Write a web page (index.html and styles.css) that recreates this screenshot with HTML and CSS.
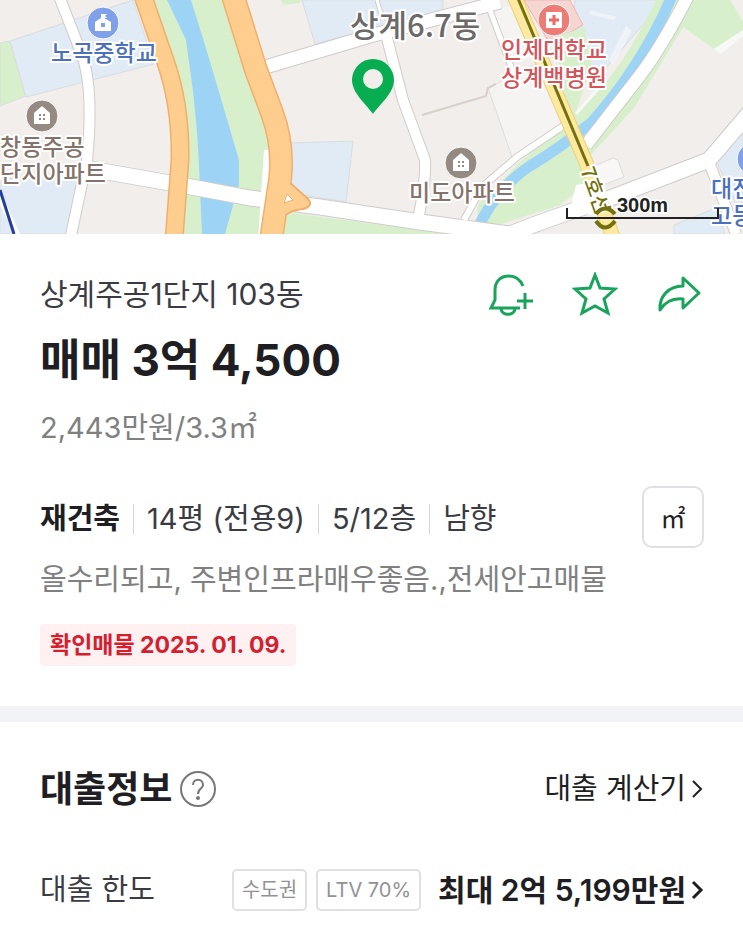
FILE: index.html
```
<!DOCTYPE html>
<html lang="ko">
<head>
    <meta charset="UTF-8">
    <meta name="viewport" content="width=device-width, initial-scale=1.0">
    <title>상계주공1단지 103동</title>
    <link rel="stylesheet" href="styles.css">
</head>
<body>
    <svg class="mapa" viewBox="0 0 743 234" role="img" aria-label="지도">
        <rect width="743" height="234" fill="#f1eeec"/>

        <!-- school lots and parks -->
        <g stroke="#d9dde0" stroke-width="1">
            <path d="M0 43L10 41L26 96L0 106Z" fill="#d8efcb"/>
            <path d="M10 41L133 0L154 64L26 97Z" fill="#e1ebf5"/>
            <path d="M0 180L78 170L86 185L72 234H0Z" fill="#e1ebf5"/>
            <path d="M302 0H443V10L315 44Z" fill="#e1ebf5"/>
            <path d="M290 143L353 141L346 202L285 192Z" fill="#e1ebf5"/>
            <path d="M575 0H664L600 75L570 70Z" fill="#e1ebf5"/>
            <path d="M674 225L716 208L725 234H674Z" fill="#e1ebf5"/>
            <path d="M716 160L743 130V220Z" fill="#e1ebf5"/>
        </g>
        <path d="M281 0H301L299 3L283 5Z" fill="#d8efcb"/>
        <path d="M0 190L20 234H14L0 205Z" fill="#fff"/>
        <path d="M524 0H570L583 25L550 44Z" fill="#f6d6d3" stroke="#eeb4ae"/>
        <path d="M554 38L584 27L592 64L570 130Z" fill="#d8efcb"/>
        <path d="M679 24L692 0H730L743 22V30L714 49Z" fill="#d8efcb"/>
        <path d="M714 49L743 30V36L721 54Z" fill="#f8f8f7"/>
        <path d="M488 88L540 62L570 120L513 160Z" fill="#f5f4f3" stroke="#dfddda"/>
        <path d="M494 10L520 4L540 55L510 65Z" fill="#f5f4f3"/>
        <path d="M590 10L617 17L613 20L589 14M609 60L626 26L632 30L613 66" fill="#eff3f8"/>
        <path d="M422 115L486 96L488 88L496 84" fill="none" stroke="#d9d1c9" stroke-width="2"/>

        <!-- river and its banks -->
        <path d="M134 0H236L276 130L260 234H170L184 130Z" fill="#d8efcb"/>
        <path d="M167 0H191L205 45Q220 95 239 160V184L225 234H202L200 190Q198 120 189 62L186 40Z" fill="#9dd4f6"/>
        <path d="M656 0H700Q660 65 634 108L590 156L592 180L560 205L476 232L478 205L520 162L578 112Q620 75 656 0Z" fill="#d8efcb"/>
        <path d="M672 -4Q642 66 592 122Q560 148 530 166Q496 188 476 232" fill="none" stroke="#9dd4f6" stroke-width="11"/>
        <path d="M284 212L450 234H275Z" fill="#d8efcb"/>
        <path d="M576 114L602 84" stroke="#f8f8f6" stroke-width="3"/>
        <path d="M592 167L613 158L618 160L624 177L590 190Z" fill="#f8f7f6" stroke="#dfddda"/>

        <!-- white streets, grey outline below -->
        <g fill="none" stroke-linejoin="round">
            <g stroke="#cfccca">
                <path d="M59 -4L82 55Q94 90 87 160L70 240" stroke-width="12"/>
                <path d="M85 168L170 183L250 198L320 207L420 222L510 234Q550 218 600 202L709 160L750 112" stroke-width="17"/>
                <path d="M262 68L370 36L500 2" stroke-width="15"/>
                <path d="M387 38L403 100L425 160Q426 180 419 215" stroke-width="12"/>
                <path d="M377 0L383 20" stroke-width="5"/>
                <path d="M488 5L516 80" stroke-width="7"/>
                <path d="M464 220L482 187L517 157L572 120" stroke-width="8"/>
                <path d="M688 -4Q660 50 638 78L586 145" stroke-width="14"/>
                <path d="M709 162L736 234" stroke-width="12"/>
            </g>
            <g stroke="#fff">
                <path d="M59 -4L82 55Q94 90 87 160L70 240" stroke-width="10"/>
                <path d="M85 168L170 183L250 198L320 207L420 222L510 234Q550 218 600 202L709 160L750 112" stroke-width="15"/>
                <path d="M262 68L370 36L500 2" stroke-width="13"/>
                <path d="M387 38L403 100L425 160Q426 180 419 215" stroke-width="10"/>
                <path d="M377 0L383 20" stroke-width="3"/>
                <path d="M488 5L516 80" stroke-width="5"/>
                <path d="M464 220L482 187L517 157L572 120" stroke-width="6"/>
                <path d="M688 -4Q660 50 638 78L586 145" stroke-width="12"/>
                <path d="M709 162L736 234" stroke-width="10"/>
                <path d="M268 150L262 240" stroke-width="8"/>
            </g>
        </g>

        <!-- orange main roads -->
        <g fill="none" stroke="#eeb06c">
            <path d="M143 -4L165 60Q181 105 180 160L174 240" stroke-width="19"/>
            <path d="M233 -4L256 70L272 113Q284 145 280 180L271 240" stroke-width="24"/>
        </g>
        <path d="M288 181L308 199Q314 206 303 209Q286 211 282 220L274 213L278 180Z" fill="#ffcd8d" stroke="#eeb06c" stroke-width="2"/>
        <g fill="none" stroke="#ffcd8d">
            <path d="M143 -4L165 60Q181 105 180 160L174 240" stroke-width="16"/>
            <path d="M233 -4L256 70L272 113Q284 145 280 180L271 240" stroke-width="21"/>
        </g>
        <path d="M287 194L293 200L284 203Z" fill="#fff" stroke="#eeb06c"/>

        <!-- line 7 -->
        <g fill="none">
            <path d="M514 -4L585 160L614 240" stroke="#e8d17e" stroke-width="15"/>
            <path d="M514 -4L585 160L614 240" stroke="#fde9a0" stroke-width="13"/>
            <path d="M517 -4L588 166" stroke="#74700d" stroke-width="3"/>
            <path d="M0 190L14 234" stroke="#233f9a" stroke-width="3"/>
        </g>
        <path d="M576 185L604 180L608 205L590 215L570 210Z" fill="#fff"/>

        <!-- place icons -->
        <g stroke="#fff" stroke-width="1">
            <circle cx="103" cy="23" r="16" fill="#7fa1e9"/>
            <circle cx="42" cy="116" r="16" fill="#958a82"/>
            <circle cx="461" cy="163" r="16" fill="#958a82"/>
            <circle cx="554" cy="20" r="16" fill="#eb7d76"/>
            <circle cx="753" cy="159" r="16" fill="#7fa1e9"/>
        </g>
        <path d="M95 31V22L101 18V14H107L105 16L107 18H104L111 22V31Z" fill="#fff"/>
        <rect x="101" y="23" width="4" height="4" fill="#7fa1e9"/>
        <g id="casa">
            <path d="M34 124V113L42 106L50 113V124Z" fill="#fff"/>
            <path d="M39 114h2v2h-2zM43 114h2v2h-2zM39 118h2v2h-2zM43 118h2v2h-2z" fill="#958a82"/>
        </g>
        <use href="#casa" x="419" y="47"/>
        <rect x="546" y="12" width="16" height="16" rx="1" fill="#fff"/>
        <path d="M554 15V25M549 20H559" stroke="#eb6a65" stroke-width="3"/>

        <!-- labels -->
        <g class="rotulo">
            <text x="51" y="61" fill="#4d70ba">노곡중학교</text>
            <text x="0" y="155" fill="#84736a">창동주공</text>
            <text x="-13" y="182" fill="#84736a">8단지아파트</text>
            <text x="409" y="201" fill="#84736a">미도아파트</text>
            <text x="501" y="58" fill="#d2555c">인제대학교</text>
            <text x="501" y="86" fill="#d2555c">상계백병원</text>
            <text x="711" y="197" fill="#4d70ba">대진</text>
            <text x="711" y="224" fill="#4d70ba">고등</text>
            <text class="barrio" x="350" y="37" fill="#6c6968">상계6.7동</text>
            <text class="linea" transform="translate(580 170) rotate(70)" fill="#74700d">7호선</text>
        </g>
        <path d="M596 214Q605 203 615 214M596 221Q605 234 615 221" fill="none" stroke="#74700d" stroke-width="4"/>

        <!-- scale -->
        <path d="M567 208V218H718V208" fill="none" stroke="#222" stroke-width="2"/>
        <text class="escala" x="617" y="212">300m</text>

        <path fill-rule="evenodd" d="M373 114C366 104 352 93 352 80A21 21 0 0 1 394 80C394 93 380 104 373 114ZM373 69A10 10 0 1 0 373 89A10 10 0 1 0 373 69Z" fill="#07ad50"/>
    </svg>

    <section class="resumen">
        <div class="fila">
            <h2 class="edificio">상계주공1단지 103동</h2>
            <div class="acciones">
                <button type="button" aria-label="알림 추가">
                    <svg width="46" height="44" viewBox="0 0 46 44">
                        <path d="M35 14C32 7 27 4 21 4C12 4 7 10 7 18V28L3 36H32M13 37C14 44 26 44 27 37M37 21V37M29 29H45"/>
                    </svg>
                </button>
                <button type="button" aria-label="관심 매물">
                    <svg width="46" height="44" viewBox="0 0 46 44">
                        <path d="M23 3L28 16L43 17L32 27L36 41L23 34L10 41L14 27L3 17L18 16Z"/>
                    </svg>
                </button>
                <button type="button" aria-label="공유">
                    <svg width="46" height="44" viewBox="0 0 46 44">
                        <path d="M27 6L43 21L27 36V27C16 26 9 30 4 38C3 25 12 14 27 14Z" stroke-linejoin="round"/>
                    </svg>
                </button>
            </div>
        </div>
        <h1 class="precio">매매 3억 4,500</h1>
        <p class="unitario">2,443만원/3.3㎡</p>

        <div class="fila fila-datos">
            <ul class="datos">
                <li><strong>재건축</strong></li>
                <li>14평 (전용9)</li>
                <li>5/12층</li>
                <li>남향</li>
            </ul>
            <button class="btn-unidad" type="button">㎡</button>
        </div>
        <p class="descripcion">올수리되고, 주변인프라매우좋음.,전세안고매물</p>
        <span class="confirmado">확인매물 2025. 01. 09.</span>
    </section>

    <section class="prestamo">
        <div class="fila">
            <div class="titulo">
                <h2>대출정보</h2>
                <button type="button" aria-label="도움말">
                    <svg width="38" height="38" viewBox="0 0 38 38">
                        <circle cx="19" cy="19" r="17"/>
                        <path d="M14 15C14 8 24 8 24 15C24 19 19 18 19 24"/>
                        <circle class="punto" cx="19" cy="28" r="2"/>
                    </svg>
                </button>
            </div>
            <a class="calculadora" href="#">대출 계산기
                <svg width="14" height="22" viewBox="0 0 14 22"><path d="M3 3L11 11L3 19"/></svg>
            </a>
        </div>
        <div class="fila fila-limite">
            <span class="limite">대출 한도</span>
            <div class="valor">
                <span class="etiqueta">수도권</span>
                <span class="etiqueta">LTV 70%</span>
                <a class="maximo" href="#">최대 2억 5,199만원
                    <svg width="14" height="22" viewBox="0 0 14 22"><path d="M3 3L11 11L3 19"/></svg>
                </a>
            </div>
        </div>
    </section>
</body>
</html>
```
FILE: styles.css
```
* {
    box-sizing: border-box;
}
body {
    margin: 0;
    background-color: #fff;
    color: #3b3b43;
    font-family: Inter, "Noto Sans CJK KR", sans-serif;
    font-size: 29px;
    line-height: 40px;
}
h1, h2, p, ul {
    margin: 0;
    padding: 0;
}
button {
    padding: 0;
    border: 0;
    background: none;
    font-family: inherit;
    cursor: pointer;
}
a {
    color: #1e1e23;
    text-decoration: none;
}
svg {
    display: block;
}

/* mapa */
.mapa {
    width: 100%;
    height: auto;
}
.rotulo {
    font-family: "Noto Sans CJK KR", sans-serif;
    font-size: 23px;
    font-weight: 500;
    stroke: #fff;
    stroke-width: 4px;
    stroke-linejoin: round;
    paint-order: stroke;
}
.rotulo .barrio {
    font-size: 31px;
}
.rotulo .linea {
    font-size: 20px;
}
.escala {
    font-family: "Liberation Sans", sans-serif;
    font-size: 20px;
    font-weight: bold;
    fill: #222;
    stroke: #fff;
    stroke-width: 3px;
    paint-order: stroke;
}

.fila {
    display: flex;
    justify-content: space-between;
    align-items: center;
}

/* resumen */
.resumen {
    padding: 38px 39px 40px 40px;
    border-bottom: 16px solid #f1f3f6;
}
.edificio {
    font-size: 30px;
    font-weight: 400;
}
.acciones {
    display: flex;
    gap: 38px;
    margin-right: 2px;
}
.acciones svg {
    fill: none;
    stroke: #18a55b;
    stroke-width: 3;
}
.precio {
    margin-top: 16px;
    color: #1e1e23;
    font-size: 44px;
    font-weight: 700;
    line-height: 56px;
}
.unitario {
    margin-top: 20px;
    color: #808080;
    font-weight: 400;
}
.fila-datos {
    margin-top: 38px;
}
.datos {
    display: flex;
    padding-top: 4px;
    list-style: none;
}
.datos li {
    display: flex;
    align-items: center;
}
.datos li + li::before {
    content: "";
    width: 1px;
    height: 30px;
    margin: 0 13px;
    background-color: #d8d8dc;
}
.datos strong {
    color: #1e1e23;
    font-weight: 700;
}
.btn-unidad {
    width: 62px;
    height: 62px;
    border: 2px solid #e0e0e2;
    border-radius: 10px;
    color: #1e1e23;
    font-size: 25px;
}
.descripcion {
    margin-top: 12px;
    color: #808080;
    font-weight: 400;
}
.confirmado {
    display: inline-block;
    margin-top: 24px;
    padding: 0 10px;
    border-radius: 4px;
    background-color: #fff1f2;
    color: #d3202e;
    font-size: 23px;
    font-weight: 700;
    line-height: 42px;
}

/* prestamo */
.prestamo {
    padding: 41px 39px 24px 40px;
}
.titulo {
    display: flex;
    align-items: center;
    gap: 7px;
}
.titulo h2 {
    color: #1e1e23;
    font-size: 36px;
    font-weight: 700;
    line-height: 52px;
}
.titulo svg {
    fill: none;
    stroke: #77777a;
    stroke-width: 2;
}
.titulo .punto {
    fill: #77777a;
    stroke: none;
}
.calculadora, .maximo {
    display: flex;
    align-items: center;
    gap: 4px;
}
.calculadora svg, .maximo svg {
    fill: none;
    stroke: #1e1e23;
    stroke-width: 2;
}
.maximo {
    margin-left: 8px;
    font-size: 30px;
    font-weight: 600;
}
.maximo svg {
    stroke-width: 3;
}
.fila-limite {
    margin-top: 54px;
}
.valor {
    display: flex;
    align-items: center;
    gap: 9px;
}
.etiqueta {
    padding: 0 8px;
    border: 2px solid #e0e0e2;
    border-radius: 5px;
    color: #929294;
    font-size: 20px;
    line-height: 38px;
}
```
